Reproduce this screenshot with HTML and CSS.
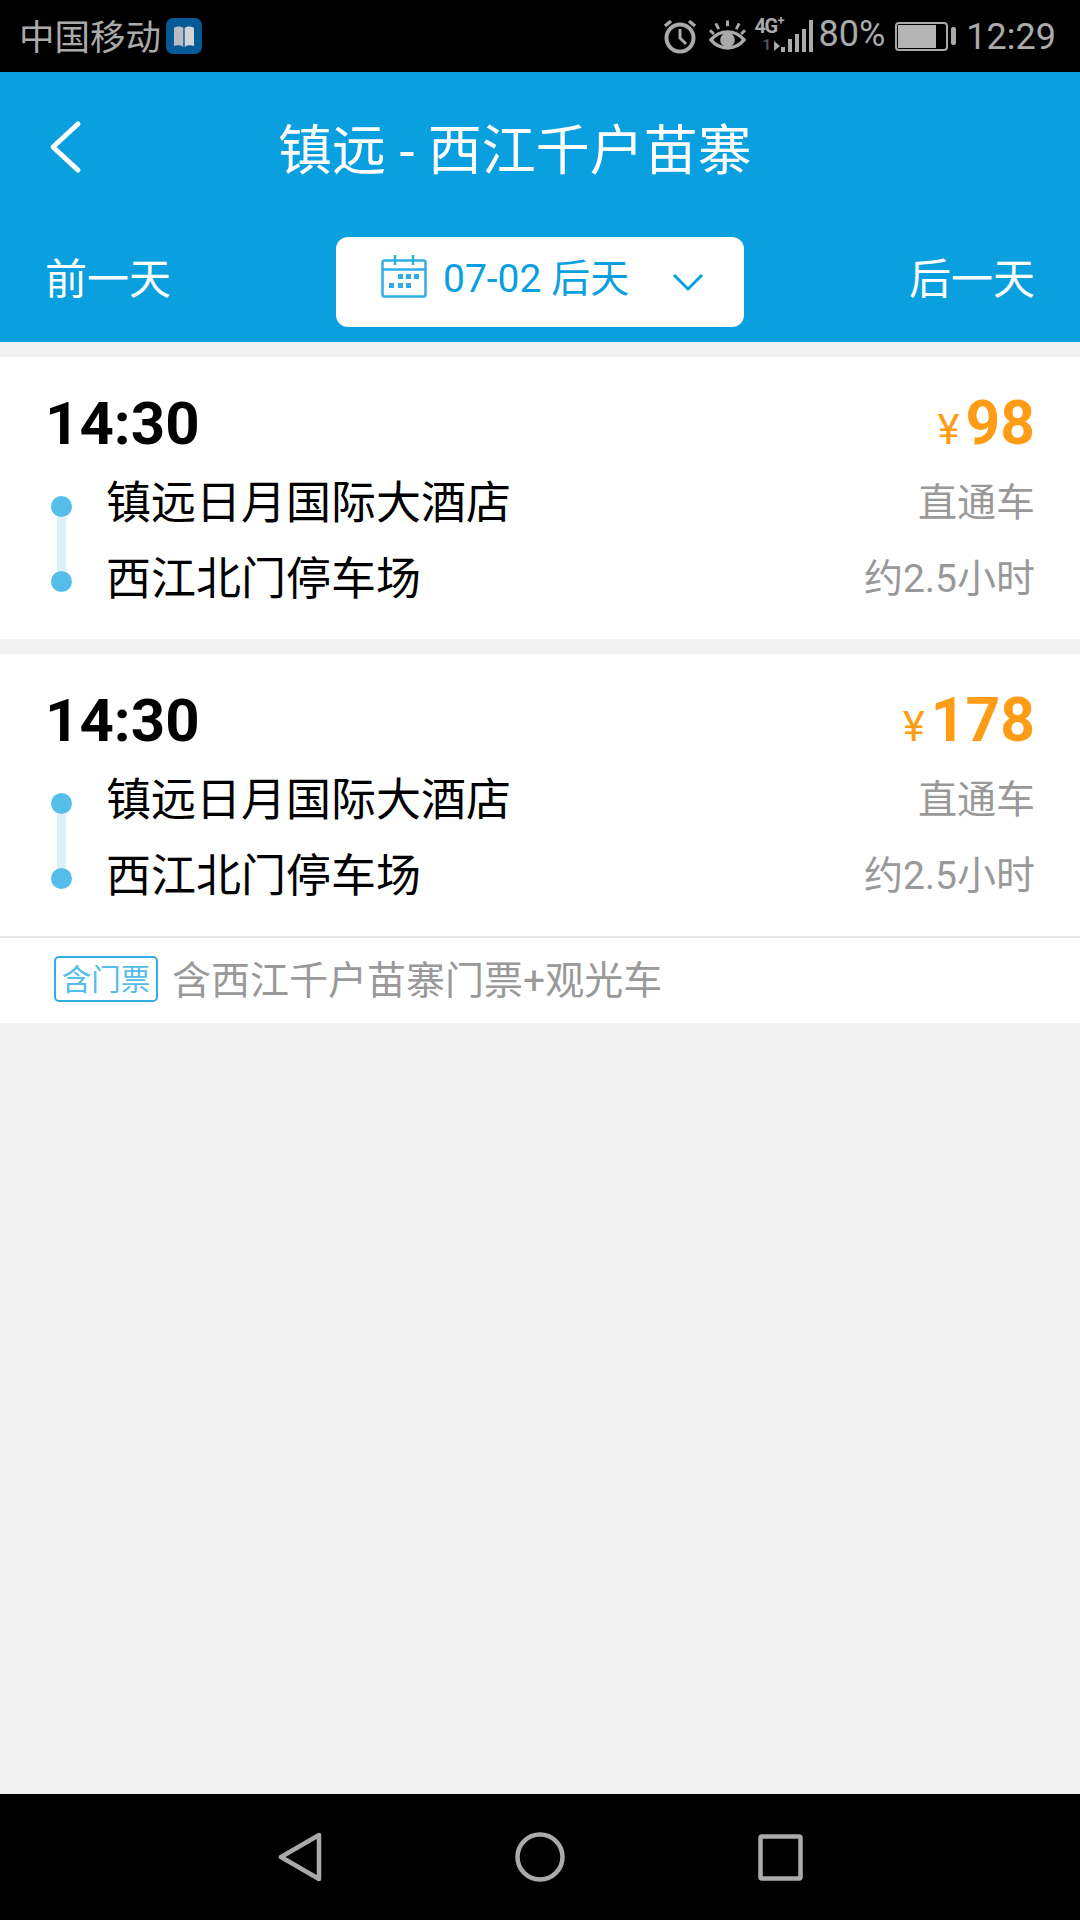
FILE: index.html
```html
<!DOCTYPE html>
<html lang="zh-CN">
<head>
  <meta charset="UTF-8">
  <title>镇远 - 西江千户苗寨</title>
  <link rel="stylesheet" href="styles.css">
</head>
<body>
  <div class="status-bar">
    <div class="status-left">
      <span class="carrier">中国移动</span>
      <span class="app-badge">
        <svg width="24" height="24" viewBox="0 0 24 24">
          <path d="M2 4c3-2 7-2 9.300 0v19c-2.300-2-6.300-2-9.300-1z" fill="#b9bdc1"/>
          <path d="M22 4c-3-2-7-2-9.300 0v19c2.300-2 6.300-2 9.300-1z" fill="#d2d4d6"/>
        </svg>
      </span>
    </div>
    <div class="status-right">
      <svg class="ico-alarm" width="34" height="36" viewBox="0 0 34 36" fill="none" stroke="#aaa">
        <circle cx="17" cy="20" r="13.500" stroke-width="4"/>
        <path d="M17 11v9l6 6" stroke-width="3"/>
        <path d="M2 8l6-5M32 8l-6-5" stroke-width="3.500"/>
      </svg>
      <svg class="ico-eye" width="37" height="34" viewBox="0 0 38 34" fill="none" stroke="#aaa">
        <path d="M2 21c9-11 25-11 34 0-9 11-25 11-34 0z" stroke-width="3.500"/>
        <circle cx="19" cy="21" r="7.500" fill="#aaa" stroke="none"/>
        <path d="M19 1v6M7 4l3 6M31 4l-3 6M1 11l4 4M37 11l-4 4" stroke-width="3"/>
      </svg>
      <div class="net">
        <span class="net-label">4G<sup>+</sup></span>
        <div class="net-arrows">1<i></i></div>
      </div>
      <div class="signal">
        <i class="s1"></i><i class="s2"></i><i class="s3"></i><i class="s4"></i><i class="s5"></i>
      </div>
      <span class="battery-text">80%</span>
      <div class="battery">
        <div class="battery-body"><div class="battery-fill"></div></div>
        <div class="battery-nub"></div>
      </div>
      <span class="clock">12:29</span>
    </div>
  </div>

  <div class="header">
    <div class="title-row">
      <svg class="back" width="33" height="54" viewBox="0 0 34 56" fill="none" stroke="#fff" stroke-width="5" stroke-linecap="round" stroke-linejoin="round">
        <path d="M30 4L4 28l26 24"/>
      </svg>
      <h1 class="title">镇远 - 西江千户苗寨</h1>
    </div>
    <div class="date-row">
      <span class="day-link">前一天</span>
      <div class="date-pill">
        <svg class="cal" width="46" height="44" viewBox="0 0 46 44" fill="none" stroke="#2eaee3" stroke-width="2.500">
          <rect x="1.500" y="6.500" width="43" height="36" rx="2"/>
          <path d="M1.500 15.500h43M14 1v10M32 1v10"/>
          <g fill="#2eaee3" stroke="none">
            <rect x="17" y="20" width="5" height="5"/><rect x="25" y="20" width="5" height="5"/><rect x="33" y="20" width="5" height="5"/>
            <rect x="8" y="29" width="5" height="5"/><rect x="17" y="29" width="5" height="5"/><rect x="25" y="29" width="5" height="5"/>
          </g>
        </svg>
        <span class="date-text">07-02 后天</span>
        <svg class="caret" width="32" height="20" viewBox="0 0 32 20" fill="none" stroke="#0a9fdf" stroke-width="3">
          <path d="M2 3l14 14L30 3"/>
        </svg>
      </div>
      <span class="day-link">后一天</span>
    </div>
  </div>

  <div class="list">
    <div class="trip">
      <div class="trip-top">
        <span class="time">14:30</span>
        <span class="price"><small>¥</small>98</span>
      </div>
      <div class="trip-route">
        <div class="rail"><i class="dot"></i><i class="bar"></i><i class="dot"></i></div>
        <div class="stops">
          <div class="stop"><span>镇远日月国际大酒店</span><span class="meta">直通车</span></div>
          <div class="stop"><span>西江北门停车场</span><span class="meta">约2.5小时</span></div>
        </div>
      </div>
    </div>

    <div class="trip-group">
      <div class="trip">
        <div class="trip-top">
          <span class="time">14:30</span>
          <span class="price"><small>¥</small>178</span>
        </div>
        <div class="trip-route">
          <div class="rail"><i class="dot"></i><i class="bar"></i><i class="dot"></i></div>
          <div class="stops">
            <div class="stop"><span>镇远日月国际大酒店</span><span class="meta">直通车</span></div>
            <div class="stop"><span>西江北门停车场</span><span class="meta">约2.5小时</span></div>
          </div>
        </div>
      </div>
      <div class="trip-note">
        <span class="tag">含门票</span>
        <span class="note-text">含西江千户苗寨门票+观光车</span>
      </div>
    </div>
  </div>

  <div class="nav-bar">
    <svg width="44" height="50" viewBox="0 0 44 50" fill="none" stroke="#aaa" stroke-width="4.500" stroke-linejoin="round">
      <path d="M41 3v44L3 25z"/>
    </svg>
    <svg width="50" height="50" viewBox="0 0 50 50" fill="none" stroke="#aaa" stroke-width="4.500">
      <circle cx="25" cy="25" r="22.500"/>
    </svg>
    <svg width="45" height="47" viewBox="0 0 45 47" fill="none" stroke="#aaa" stroke-width="4.500" stroke-linejoin="round">
      <rect x="2.500" y="2.500" width="40" height="42" rx="1.500"/>
    </svg>
  </div>
</body>
</html>
```

FILE: styles.css
```css
* {
  box-sizing: border-box;
}

body {
  margin: 0;
  width: 1080px;
  height: 1920px;
  display: flex;
  flex-direction: column;
  background: #f2f2f2;
  font-family: Roboto, "Noto Sans CJK SC", sans-serif;
  color: #000;
}

.status-bar {
  height: 72px;
  background: #000;
  color: #aaa;
  display: flex;
  justify-content: space-between;
  align-items: center;
  padding: 0 24px 0 19px;
}

.status-left {
  display: flex;
  align-items: center;
  gap: 5px;
}

.carrier {
  font-size: 35.500px;
  padding-bottom: 4px;
}

.app-badge {
  width: 36px;
  height: 36px;
  border-radius: 7px;
  background: #045a96;
  display: flex;
  align-items: center;
  justify-content: center;
}

.status-right {
  display: flex;
  align-items: center;
}

.ico-alarm {
  margin-right: 12px;
}

.ico-eye {
  margin-right: 9px;
}

.net {
  width: 34px;
  height: 36px;
  margin-bottom: 4px;
  color: #aaa;
  line-height: 1;
}

.net-label {
  display: block;
  font-size: 20px;
  font-weight: 700;
  letter-spacing: -1.5px;
  height: 22px;
}

.net-label sup {
  font-size: 13px;
  line-height: 0;
  margin-left: 1px;
}

.net-arrows {
  font-size: 15px;
  font-weight: 700;
  color: #555;
  padding-left: 8px;
  display: flex;
  align-items: center;
}

.net-arrows i {
  width: 0;
  height: 0;
  margin-left: 3px;
  border-left: 6px solid #aaa;
  border-top: 5px solid transparent;
  border-bottom: 5px solid transparent;
}

.signal {
  display: flex;
  align-items: flex-end;
  gap: 3px;
  height: 34px;
  margin: 0 6px 2px -8px;
}

.signal i {
  width: 4px;
  background: #aaa;
  display: block;
}

.s1 { height: 5px; }
.s2 { height: 13px; }
.s3 { height: 18px; }
.s4 { height: 23px; }
.s5 { height: 32px; }

.battery-text {
  font-size: 36px;
  margin-right: 10px;
  position: relative;
  top: -2px;
}

.battery {
  display: flex;
  align-items: center;
  gap: 3px;
  margin-right: 10px;
}

.battery-body {
  width: 53px;
  height: 29px;
  border: 2px solid #aaa;
  border-radius: 4px;
  padding: 1px;
}

.battery-fill {
  width: 80%;
  height: 100%;
  background: #b4b4b4;
}

.battery-nub {
  width: 5px;
  height: 18px;
  background: #aaa;
  border-radius: 2px;
}

.clock {
  font-size: 36px;
  padding-top: 2px;
}

.header {
  height: 270px;
  background: #0a9fdf;
  color: #fff;
}

.title-row {
  height: 165px;
  padding: 0 0 16px 49px;
  display: flex;
  align-items: center;
}

.title {
  margin: 0 0 0 196px;
  font-size: 54px;
  font-weight: 400;
}

.date-row {
  display: flex;
  align-items: center;
  justify-content: space-between;
  padding: 0 45px;
}

.day-link {
  font-size: 42px;
  padding-bottom: 14px;
}

.date-pill {
  width: 408px;
  height: 90px;
  background: #fff;
  border-radius: 12px;
  color: #0a9fdf;
  display: flex;
  align-items: center;
  padding-left: 45px;
}

.cal {
  margin-bottom: 12px;
}

.date-text {
  font-size: 39px;
  margin-left: 16px;
  padding-bottom: 14px;
  flex: 1;
}

.caret {
  margin-right: 40px;
}

.list {
  flex: 1;
  display: flex;
  flex-direction: column;
  gap: 15px;
  padding-top: 15px;
}

.trip,
.trip-group {
  background: #fff;
}

.trip {
  height: 282px;
  padding: 35px 45px 0;
}

.trip-top {
  display: flex;
  justify-content: space-between;
  align-items: center;
  height: 62px;
}

.time {
  font-size: 60px;
  font-weight: 700;
}

.price {
  font-size: 60.500px;
  font-weight: 700;
  color: #ff9c16;
}

.price small {
  font-size: 42px;
  font-weight: 400;
  margin-right: 6px;
}

.trip-route {
  display: flex;
  align-items: center;
  margin-top: 7px;
}

.rail {
  width: 21px;
  margin: 13px 0 0 6px;
  display: flex;
  flex-direction: column;
  align-items: center;
}

.dot {
  width: 21px;
  height: 21px;
  border-radius: 50%;
  background: #55bdea;
}

.bar {
  width: 9px;
  height: 54px;
  background: #d9f1fa;
}

.stops {
  flex: 1;
  margin-left: 34px;
}

.stop {
  display: flex;
  justify-content: space-between;
  align-items: center;
  height: 76px;
  font-size: 45px;
}

.meta {
  font-size: 39px;
  color: #999;
}

.trip-note {
  height: 87px;
  border-top: 2px solid #e5e5e5;
  display: flex;
  align-items: center;
  padding: 0 0 4px 54px;
}

.tag {
  width: 104px;
  height: 46px;
  border: 2px solid #2eaee3;
  border-radius: 5px;
  color: #55bdea;
  font-size: 29.500px;
  padding-bottom: 4px;
  display: flex;
  align-items: center;
  justify-content: center;
}

.note-text {
  font-size: 39px;
  color: #999;
  margin-left: 14px;
  padding-bottom: 3px;
}

.nav-bar {
  height: 126px;
  background: #000;
  display: flex;
  align-items: center;
  padding: 0 277px 0 278px;
  justify-content: space-between;
}
```
